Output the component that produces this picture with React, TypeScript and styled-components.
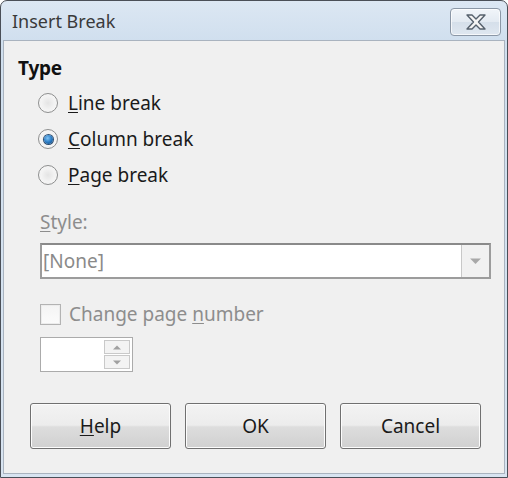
import React from "react";
import styled, { createGlobalStyle } from "styled-components";

const Global = createGlobalStyle`
  html, body { margin: 0; padding: 0; background: #ffffff; }
  body { font-family: "Noto Sans", "Open Sans", sans-serif; }
`;

const Window = styled.div`
  box-sizing: border-box;
  width: 508px;
  height: 478px;
  display: flex;
  flex-direction: column;
  border: 1px solid #4a4f57;
  border-radius: 7px 7px 0 0;
  background: linear-gradient(to bottom, #dce7f3 0px, #d0dfee 40px, #d8e4f1 100%);
  overflow: hidden;
`;

const TitleBar = styled.div`
  height: 39px;
  flex: none;
  display: flex;
  align-items: center;
  justify-content: space-between;
  padding: 0 6px 0 11px;
`;

const Title = styled.span`
  font-size: 18px;
  color: #3a3a3a;
`;

const CloseButton = styled.div`
  box-sizing: border-box;
  width: 51px;
  height: 28px;
  margin-top: 2px;
  border: 1px solid #8b97a6;
  border-radius: 4px;
  background: linear-gradient(to bottom, #f1f5f9 0%, #e3eaf2 50%, #d5dfea 51%, #dfe7f0 100%);
  box-shadow: inset 0 0 0 1px rgba(255, 255, 255, 0.7);
  display: flex;
  align-items: center;
  justify-content: center;
`;

const Content = styled.div`
  flex: 1;
  margin: 0 2px 3px 2px;
  border: 1px solid #a9b3bf;
  background: #f0f0f0;
  padding: 15px 13px 0 14px;
  display: flex;
  flex-direction: column;
`;

const Heading = styled.div`
  height: 24px;
  line-height: 24px;
  font-size: 19px;
  font-weight: bold;
  color: #111;
  letter-spacing: -0.2px;
`;

const RadioGroup = styled.div`
  margin: 5px 0 0 20px;
  display: flex;
  flex-direction: column;
`;

const OptionRow = styled.label`
  height: 36px;
  display: flex;
  align-items: center;
  gap: 10px;
  font-size: 19px;
  color: #1a1a1a;
`;

const RadioCircle = styled.span<{ $checked?: boolean }>`
  box-sizing: border-box;
  width: 20px;
  height: 20px;
  border-radius: 50%;
  border: 1px solid #8e8f8f;
  background: radial-gradient(circle at 50% 50%, #e4e4e4 0%, #f4f4f4 55%, #dadada 100%);
  box-shadow: inset 0 0 0 1px #f8f8f8;
  display: flex;
  align-items: center;
  justify-content: center;
  &::after {
    content: "";
    display: ${(p) => (p.$checked ? "block" : "none")};
    width: 9px;
    height: 9px;
    border-radius: 50%;
    background: radial-gradient(circle at 40% 35%, #7fc3f5 0%, #2b7cc4 50%, #0f3f73 100%);
    box-shadow: 0 0 0 1px #2d4e72;
  }
`;

const U = styled.span`
  text-decoration: underline;
  text-underline-offset: 2px;
  text-decoration-thickness: 1px;
`;

const Section = styled.div`
  margin-left: 22px;
  display: flex;
  flex-direction: column;
`;

const FieldLabel = styled.div`
  margin-top: 17px;
  height: 24px;
  line-height: 24px;
  font-size: 19px;
  color: #8d8d8d;
`;

const SelectBox = styled.div`
  box-sizing: border-box;
  margin-top: 9px;
  height: 36px;
  width: 451px;
  border: 2px solid #9c9c9c;
  border-top-color: #8a8a8a;
  background: #ffffff;
  display: flex;
  align-items: stretch;
`;

const SelectText = styled.div`
  flex: 1;
  display: flex;
  align-items: center;
  padding-left: 1px;
  font-size: 19px;
  color: #8a8a8a;
`;

const DropButton = styled.div`
  width: 27px;
  border-left: 1px solid #c8c8c8;
  background: #f1f1f1;
  display: flex;
  align-items: center;
  justify-content: center;
`;

const CheckRow = styled.label`
  margin-top: 23px;
  height: 24px;
  display: flex;
  align-items: center;
  gap: 8px;
  font-size: 19px;
  color: #8d8d8d;
`;

const CheckBox = styled.span`
  box-sizing: border-box;
  width: 21px;
  height: 21px;
  border: 1px solid #b3b3b3;
  background: linear-gradient(to bottom, #f4f4f4, #fbfbfb);
  box-shadow: inset 0 0 0 1px #ececec;
`;

const SpinField = styled.div`
  box-sizing: border-box;
  margin-top: 11px;
  width: 93px;
  height: 35px;
  border: 1px solid #ababab;
  background: #ffffff;
  display: flex;
  justify-content: flex-end;
  padding: 2px;
`;

const SpinButtons = styled.div`
  width: 26px;
  display: flex;
  flex-direction: column;
  gap: 1px;
`;

const SpinButton = styled.div`
  flex: 1;
  border: 1px solid #c9c9c9;
  background: #f3f3f3;
  display: flex;
  align-items: center;
  justify-content: center;
`;

const ButtonRow = styled.div`
  margin: 31px 0 0 12px;
  display: flex;
  gap: 14px;
`;

const Button = styled.div`
  box-sizing: border-box;
  width: 141px;
  height: 46px;
  border: 1px solid #707070;
  border-radius: 3px;
  background: linear-gradient(to bottom, #f3f3f3 0%, #ececec 48%, #dddddd 52%, #d0d0d0 100%);
  box-shadow: inset 0 0 0 1px #fcfcfc;
  display: flex;
  align-items: center;
  justify-content: center;
  font-size: 19px;
  color: #1a1a1a;
`;

const Triangle = ({ up, color, size }: { up?: boolean; color: string; size: number }) => (
  <svg width={size} height={size / 2 + 1} viewBox="0 0 10 6">
    {up ? <path d="M0 5.5 L5 0.5 L10 5.5 Z" fill={color} /> : <path d="M0 0.5 L10 0.5 L5 5.5 Z" fill={color} />}
  </svg>
);

const CloseIcon = () => (
  <svg width="22" height="18" viewBox="0 0 22 18">
    <path
      d="M2 2 L7 2 L11 6 L15 2 L20 2 L13.5 9 L20 16 L15 16 L11 12 L7 16 L2 16 L8.5 9 Z"
      fill="#f4f4f4"
      stroke="#55606c"
      strokeWidth="1.4"
      strokeLinejoin="round"
    />
  </svg>
);

export default function App() {
  return (
    <>
      <Global />
      <Window>
        <TitleBar>
          <Title>Insert Break</Title>
          <CloseButton>
            <CloseIcon />
          </CloseButton>
        </TitleBar>
        <Content>
          <Heading>Type</Heading>
          <RadioGroup>
            <OptionRow>
              <RadioCircle />
              <span>
                <U>L</U>ine break
              </span>
            </OptionRow>
            <OptionRow>
              <RadioCircle $checked />
              <span>
                <U>C</U>olumn break
              </span>
            </OptionRow>
            <OptionRow>
              <RadioCircle />
              <span>
                <U>P</U>age break
              </span>
            </OptionRow>
          </RadioGroup>
          <Section>
            <FieldLabel>
              <U>S</U>tyle:
            </FieldLabel>
            <SelectBox>
              <SelectText>[None]</SelectText>
              <DropButton>
                <Triangle color="#a8a8a8" size={11} />
              </DropButton>
            </SelectBox>
            <CheckRow>
              <CheckBox />
              <span>
                Change page <U>n</U>umber
              </span>
            </CheckRow>
            <SpinField>
              <SpinButtons>
                <SpinButton>
                  <Triangle up color="#a0a0a0" size={8} />
                </SpinButton>
                <SpinButton>
                  <Triangle color="#a0a0a0" size={8} />
                </SpinButton>
              </SpinButtons>
            </SpinField>
          </Section>
          <ButtonRow>
            <Button>
              <span>
                <U>H</U>elp
              </span>
            </Button>
            <Button>OK</Button>
            <Button>Cancel</Button>
          </ButtonRow>
        </Content>
      </Window>
    </>
  );
}
